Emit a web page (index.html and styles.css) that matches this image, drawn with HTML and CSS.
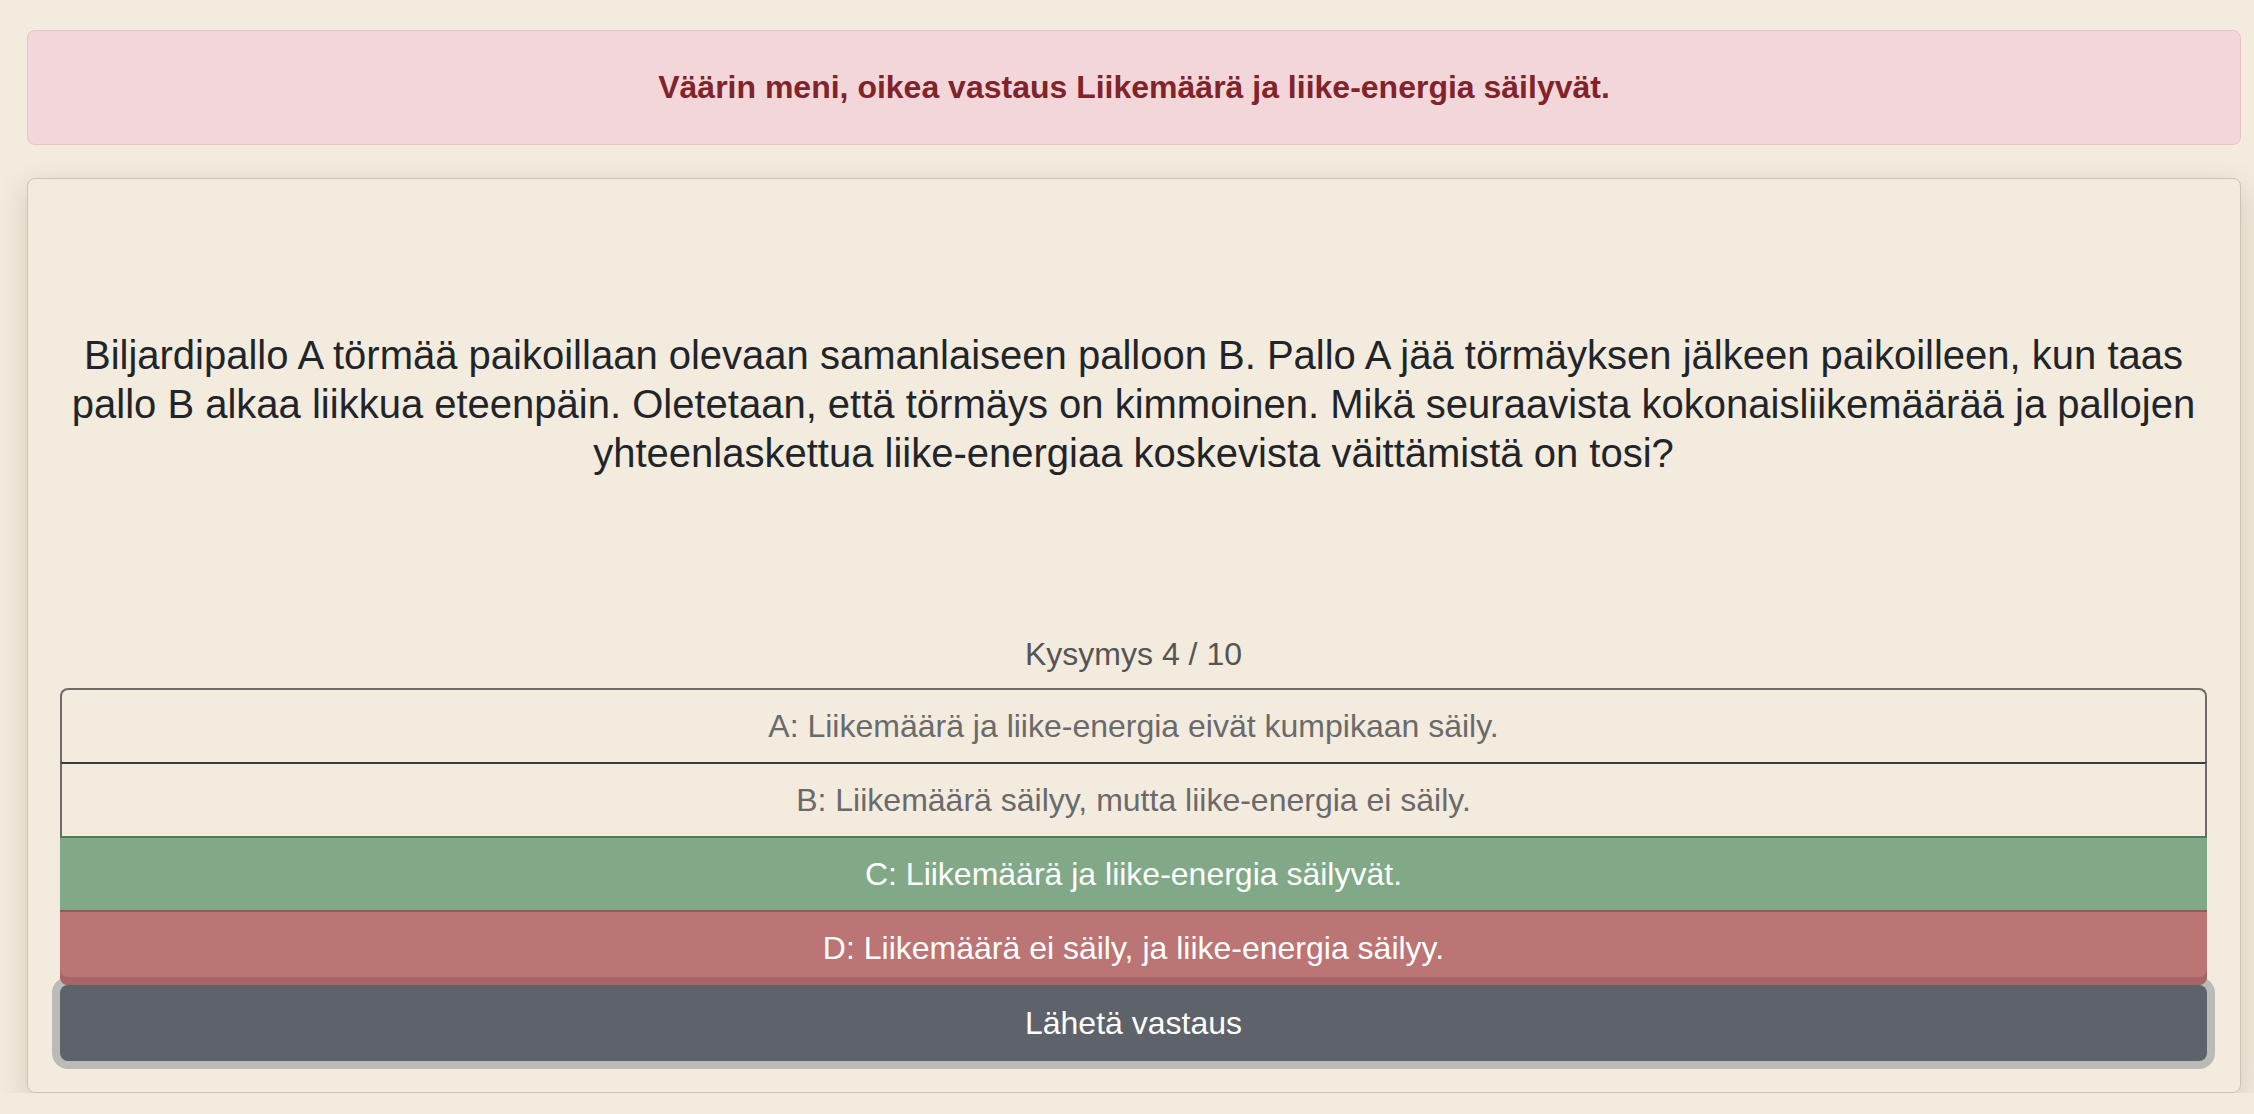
FILE: index.html
```html
<!DOCTYPE html>
<html lang="fi">
<head>
<meta charset="utf-8">
<title>Kysymys 4 / 10</title>
<link rel="stylesheet" href="styles.css">
</head>
<body>
<div class="page">
  <div class="alert">Väärin meni, oikea vastaus Liikemäärä ja liike-energia säilyvät.</div>
  <div class="card">
    <p class="question">Biljardipallo A törmää paikoillaan olevaan samanlaiseen palloon B. Pallo A jää törmäyksen jälkeen paikoilleen, kun taas pallo B alkaa liikkua eteenpäin. Oletetaan, että törmäys on kimmoinen. Mikä seuraavista kokonaisliikemäärää ja pallojen yhteenlaskettua liike-energiaa koskevista väittämistä on tosi?</p>
    <div class="counter">Kysymys 4 / 10</div>
    <div class="answers">
      <div class="answer answer-first">A: Liikemäärä ja liike-energia eivät kumpikaan säily.</div>
      <div class="answer answer-plain">B: Liikemäärä säilyy, mutta liike-energia ei säily.</div>
      <div class="answer answer-correct">C: Liikemäärä ja liike-energia säilyvät.</div>
      <div class="answer answer-wrong">D: Liikemäärä ei säily, ja liike-energia säilyy.</div>
    </div>
    <button class="submit" type="button">Lähetä vastaus</button>
  </div>
</div>
</body>
</html>
```
FILE: styles.css
```css
html, body {
  margin: 0;
  padding: 0;
  background: #f3ebde;
}
body {
  font-family: "Liberation Sans", Arial, Helvetica, sans-serif;
  font-size: 32px;
  line-height: 48px;
  color: #212529;
}
.page {
  padding: 30px 13px 0 27px;
}
.alert {
  background: #f3d6da;
  border: 1px solid #efc1c7;
  border-radius: 8px;
  color: #80232a;
  font-weight: bold;
  text-align: center;
  padding: 32px 16px 33px;
  margin-bottom: 33px;
}
.card {
  background: #f3ebde;
  border: 1px solid #c9c3b8;
  border-radius: 8px;
  box-shadow: 0 10px 30px rgba(90, 70, 40, 0.2);
  padding: 32px 33px 31px 32px;
}
.question {
  margin: 120px 0 152px;
  font-size: 40px;
  line-height: 49px;
  text-align: center;
  color: #212529;
}
.counter {
  text-align: center;
  color: #555555;
  margin-bottom: 10px;
}
.answers {
  display: flex;
  flex-direction: column;
}
.answer {
  text-align: center;
  padding: 12px 16px;
  min-height: 48px;
}
.answer-first {
  color: #6a6a6a;
  border: 2px solid #6d6b67;
  border-bottom: none;
  border-radius: 8px 8px 0 0;
}
.answer-plain {
  color: #6a6a6a;
  border-left: 2px solid #6d6b67;
  border-right: 2px solid #6d6b67;
  border-top: 2px solid #3c3c3c;
}
.answer-correct {
  color: #ffffff;
  background: #81a987;
  border-top: 2px solid #4f7b5a;
}
.answer-wrong {
  position: relative;
  z-index: 1;
  color: #ffffff;
  background: #bb7574;
  border-top: 2px solid #915b57;
  border-radius: 0 0 8px 8px;
  padding-bottom: 13px;
  box-shadow: inset 0 -8px 0 0 #a96468;
}
.submit {
  display: block;
  width: 100%;
  margin: 0;
  border: none;
  border-radius: 8px;
  background: #5e636b;
  color: #ffffff;
  font-family: inherit;
  font-size: 32px;
  line-height: 48px;
  padding: 14px 16px;
  box-shadow: 0 0 0 8px rgba(130, 138, 145, 0.5);
  cursor: pointer;
}
```
